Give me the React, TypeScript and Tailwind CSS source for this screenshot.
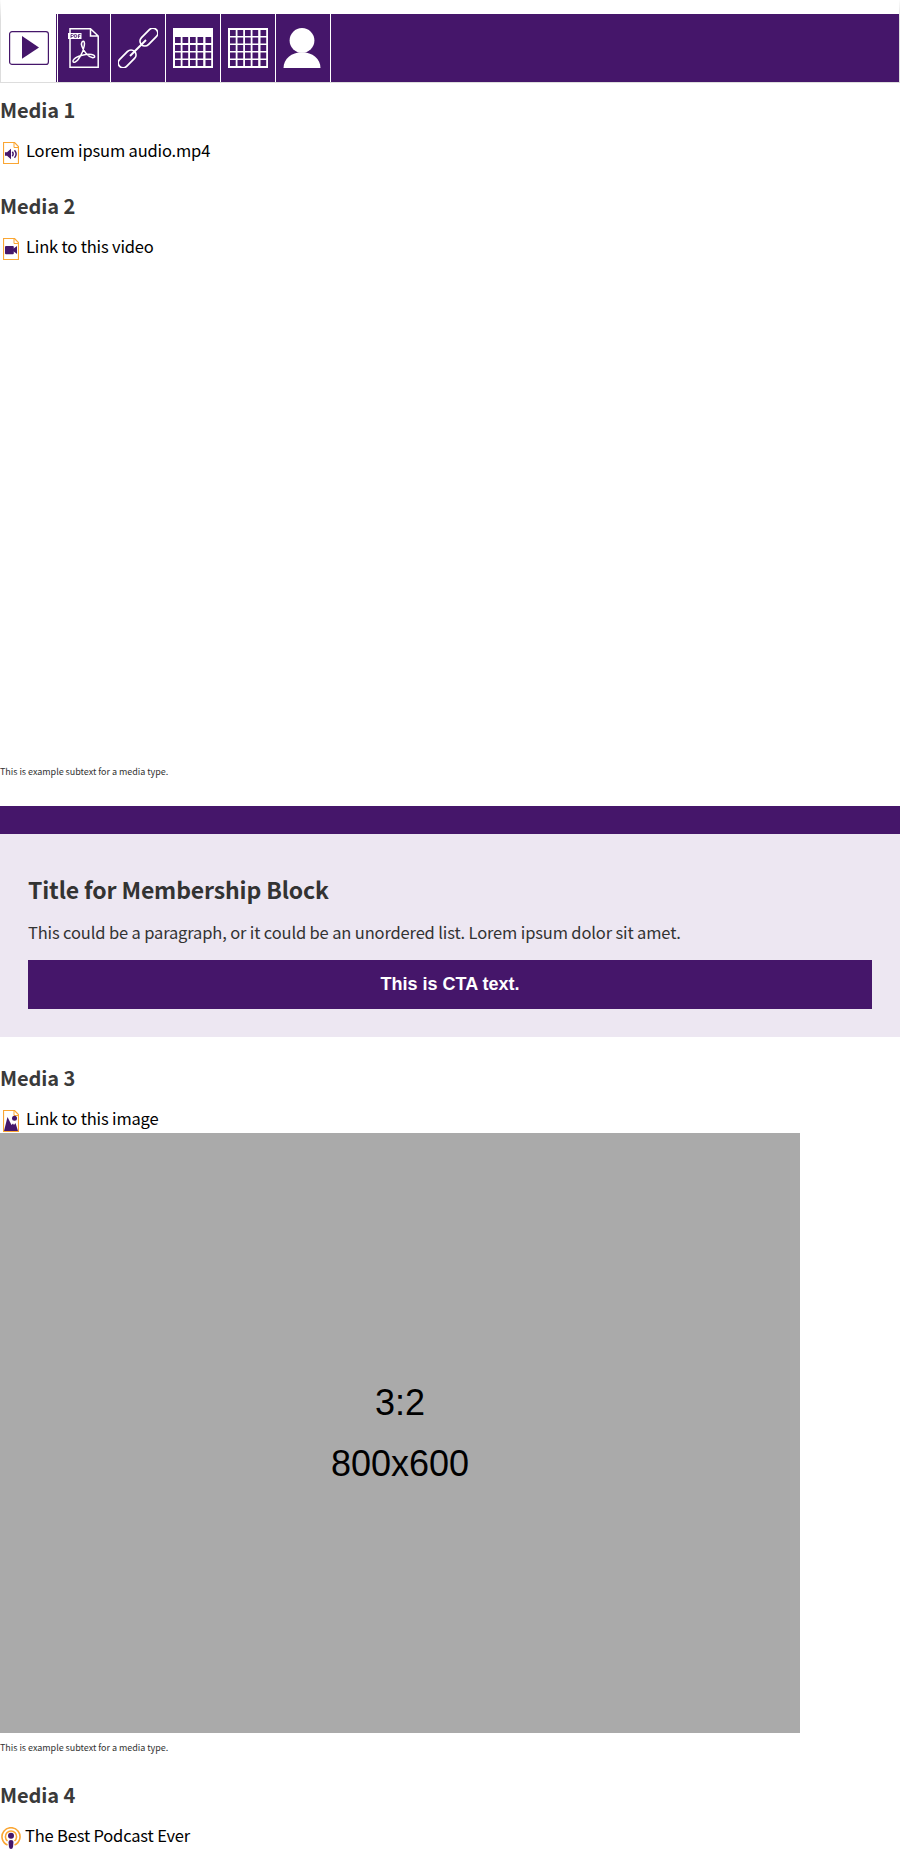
import type { ReactNode } from "react";

function Sheet({ children }: { children?: ReactNode }) {
  return (
    <svg className="ml-[3px] h-[22px] w-4 shrink-0" viewBox="0 0 16 22" fill="none">
      <path d="M.5.5h11l4 4v17H.5z" stroke="#faa633" strokeWidth="1.200" />
      <path d="M11 .5v5h4.500" stroke="#faa633" />
      {children}
    </svg>
  );
}

function AudioIcon() {
  return (
    <Sheet>
      <path d="M2 10.300h2l4-3.500v10.400l-4-3.500H2z" fill="#45166a" />
      <path d="M9.300 9.800q1.800 2.200 0 4.400M11.500 8.200q3.300 3.800 0 7.600" stroke="#45166a" strokeWidth="1.400" />
    </Sheet>
  );
}

function VideoIcon() {
  return (
    <Sheet>
      <rect x="2" y="8" width="8.800" height="8.300" rx="1" fill="#45166a" />
      <path d="M10 11l4-3v8l-4-3z" fill="#45166a" />
    </Sheet>
  );
}

function ImageIcon() {
  return (
    <Sheet>
      <path d="M1 21L4.500 7l4 8 1.500-1.500 1 1.500 1.500-2L15 21z" fill="#45166a" />
      <circle cx="11.500" cy="8.300" r="2.500" fill="#45166a" />
    </Sheet>
  );
}

function PodcastIcon() {
  return (
    <svg className="ml-px h-[22px] w-5 shrink-0" viewBox="0 0 20 22" fill="none">
      <path d="M6.500 18A9 9 0 1 1 13.500 18" stroke="#faa633" strokeWidth="1.600" />
      <path d="M6.500 14A5.600 5.600 0 1 1 13.500 14" stroke="#faa633" strokeWidth="1.600" />
      <circle cx="10" cy="8.800" r="3" fill="#45166a" />
      <path d="M7.500 15q0-2 2.500-2t2.500 2L12 20q-.3 2-2 2t-2-2z" fill="#45166a" />
    </svg>
  );
}

function PlayIcon() {
  return (
    <svg className="h-[34px] w-10" viewBox="0 0 40 34" fill="none">
      <rect x=".6" y=".6" width="38.800" height="32.800" rx="2.500" stroke="#45166a" strokeWidth="1.200" />
      <path d="M13 5L30 16.500 13 27.800z" fill="#45166a" />
    </svg>
  );
}

function PdfIcon() {
  return (
    <svg className="h-10 w-8" viewBox="0 0 32 40" fill="none" stroke="#fff">
      <path d="M2 11V39.300H30.200V8L22.500.8H2V5M22.500.8V8h7.500" strokeWidth="1.500" />
      <rect x="0" y="5" width="13.500" height="6" fill="#fff" stroke="none" />
      <path d="M3 10V6.500h1.500q1 0 1 1t-1 1H3M6.700 6.500v3h1q1.200 0 1.200-1.500t-1.200-1.500zM10.500 10V6.500h2M10.500 8.200h1.600" stroke="#45166a" strokeWidth=".8" />
      <path d="M14 14c2-1.800 3 0 2.200 4-1 6-5.500 14.500-9 16-2.500.8-3-1-1-3 3-3 12.500-5.500 17.500-4.500 4 .8 3.500 3.500 1 3.300-4-.6-9.300-6.500-10.800-11.500-.6-2-.5-3.500.1-4.300z" strokeWidth="1.500" />
    </svg>
  );
}

function LinkIcon() {
  return (
    <svg className="h-10 w-10" viewBox="0 0 40 40" fill="none" stroke="#fff" strokeWidth="1.800">
      <rect x="-10.500" y="-4.900" width="21" height="9.800" rx="4.900" transform="translate(30.900 9.100) rotate(-45)" />
      <rect x="-10.500" y="-4.900" width="21" height="9.800" rx="4.900" transform="translate(9.100 30.900) rotate(-45)" />
      <path d="M12 28L28 12" strokeWidth="2" />
    </svg>
  );
}

const columns = [2, 9.5, 17, 24.5, 32.5];

function GridIcon({ header }: { header: boolean }) {
  const rows = header ? [9, 17, 24.5, 32] : [2, 9.5, 17, 24.5, 32];
  return (
    <svg className="h-10 w-10" viewBox="0 0 40 40">
      <path d="M0 0h40v40H0z" fill="#fff" />
      {rows.map((y) =>
        columns.map((x) => <rect key={`${x}-${y}`} x={x} y={y} width="5.700" height="6" fill="#45166a" />),
      )}
    </svg>
  );
}

function PersonIcon() {
  return (
    <svg className="h-10 w-10" viewBox="0 0 40 40" fill="#fff">
      <circle cx="19" cy="12.400" r="12.400" />
      <path d="M.5 40C.5 31 8.500 24.300 19 24.300S37.500 31 37.500 40z" />
    </svg>
  );
}

function Media({ title, icon, label, spacing = "ml-[7px]" }: { title: string; icon: ReactNode; label: string; spacing?: string }) {
  return (
    <section className="whitespace-nowrap">
      <h2 className="pt-px text-[20px] font-bold leading-8 tracking-[-0.1px] text-[#3a3a3a]">{title}</h2>
      <a className="mt-3 flex h-[27px] items-start text-[16.5px] leading-6 tracking-[-0.17px] text-black">
        <span className="flex pt-1">{icon}</span>
        <span className={spacing}>{label}</span>
      </a>
    </section>
  );
}

function Subtext() {
  return <p className="text-[9px] leading-3 tracking-[-0.03px] text-[#333]">This is example subtext for a media type.</p>;
}

const tab = "flex w-[55px] items-center justify-center border-r border-white";

export default function App() {
  return (
    <main className="h-[1864px] w-[900px] overflow-hidden bg-white font-['Noto_Sans_CJK_SC',sans-serif]">
      <nav className="flex h-[83px] border border-t-0 border-[#ddd] pt-[14px] [border-image:linear-gradient(to_bottom,#fff,#ddd_20px)_1]">
        <div className="flex w-full bg-[#45166a]">
          <div className="flex w-[55px] items-center justify-center bg-white"><PlayIcon /></div>
          <div className="ml-px flex w-[54px] items-center justify-center border-x border-white"><PdfIcon /></div>
          <div className={tab}><LinkIcon /></div>
          <div className={tab}><GridIcon header /></div>
          <div className={tab}><GridIcon header={false} /></div>
          <div className={tab}><PersonIcon /></div>
        </div>
      </nav>
      <div className="mt-2.5"><Media title="Media 1" icon={<AudioIcon />} label="Lorem ipsum audio.mp4" /></div>
      <div className="mt-6"><Media title="Media 2" icon={<VideoIcon />} label="Link to this video" /></div>
      <div className="mt-[505px]"><Subtext /></div>

      <section className="mt-7 h-[231px] border-t-[28px] border-[#45166a] bg-[#ede7f2] px-7 pt-[39px]">
        <h2 className="text-[23px] font-bold leading-8 tracking-[-0.14px] text-[#333]">Title for Membership Block</h2>
        <p className="mt-[15px] whitespace-nowrap text-[16.5px] leading-6 tracking-[-0.147px] text-[#333]">
          This could be a paragraph, or it could be an unordered list. Lorem ipsum dolor sit amet.
        </p>
        <a className="mt-4 block h-[49px] bg-[#45166a] pt-3 text-center font-['Liberation_Sans',sans-serif] text-lg font-bold leading-6 text-white">
          This is CTA text.
        </a>
      </section>

      <div className="mt-6"><Media title="Media 3" icon={<ImageIcon />} label="Link to this image" /></div>
      <figure className="h-[600px] w-[800px] bg-[#aaa] pt-[239px] text-center font-['Liberation_Sans',sans-serif] text-4xl text-black">
        <div className="leading-[61px]">3:2</div>
        <div className="leading-[61px]">800x600</div>
      </figure>
      <div className="mt-[9px]"><Subtext /></div>
      <div className="mt-6"><Media title="Media 4" icon={<PodcastIcon />} label="The Best Podcast Ever" spacing="ml-1" /></div>
    </main>
  );
}
